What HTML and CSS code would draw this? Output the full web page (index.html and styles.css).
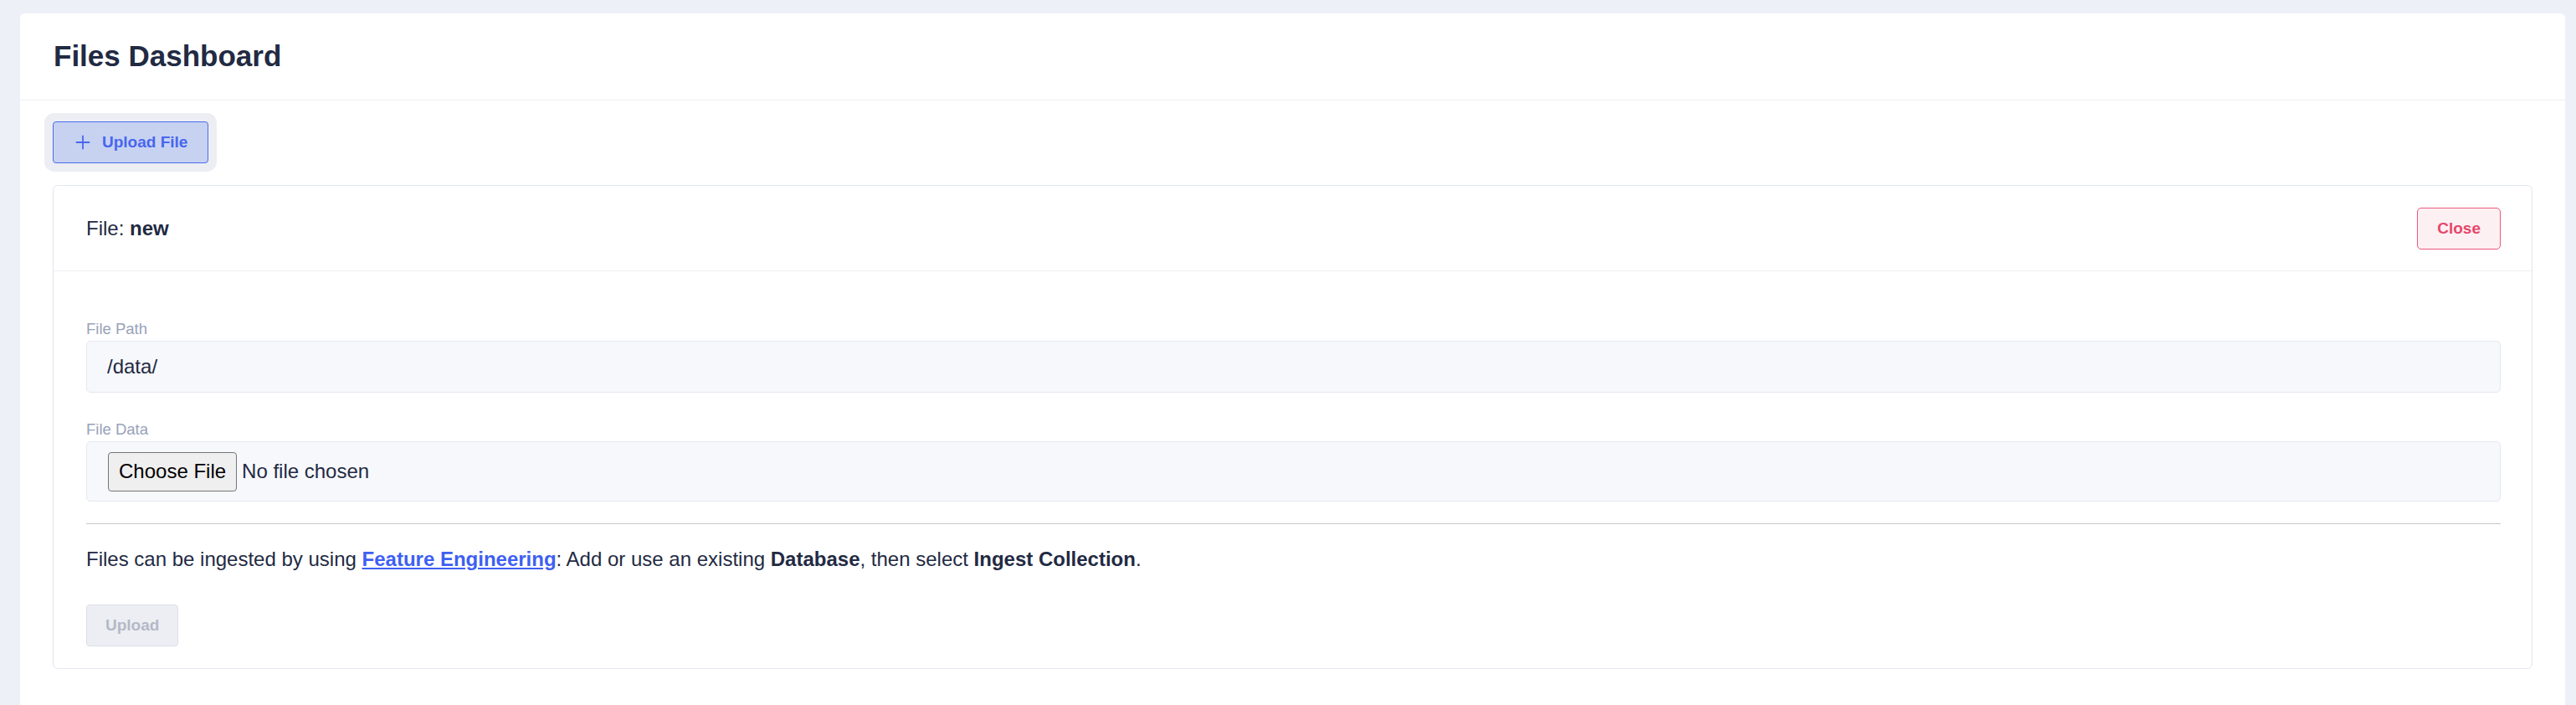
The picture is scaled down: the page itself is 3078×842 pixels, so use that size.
FILE: index.html
```html
<!DOCTYPE html>
<html lang="en">
<head>
<meta charset="utf-8">
<title>Files Dashboard</title>
<link rel="stylesheet" href="styles.css">
</head>
<body>
<div class="panel">
  <header class="panel-header">
    <h1 class="panel-title">Files Dashboard</h1>
  </header>
  <div class="panel-body">
    <div class="toolbar">
      <button class="btn-primary" type="button">
        <svg class="plus-icon" width="18" height="18" viewBox="0 0 18 18" aria-hidden="true">
          <path d="M9 1.5V16.5M1.5 9H16.5" stroke="currentColor" stroke-width="1.8" fill="none" stroke-linecap="round"/>
        </svg>
        <span>Upload File</span>
      </button>
    </div>
    <section class="card">
      <div class="card-header">
        <div class="card-title">File: <strong>new</strong></div>
        <button class="btn-close" type="button">Close</button>
      </div>
      <div class="card-body">
        <div class="field">
          <label class="field-label" for="path">File Path</label>
          <input class="text-input" id="path" type="text" value="/data/">
        </div>
        <div class="field">
          <span class="field-label">File Data</span>
          <div class="file-box">
            <label class="file-btn">Choose File<input class="file-hidden" type="file"></label>
            <span class="file-status">No file chosen</span>
          </div>
        </div>
        <hr class="divider">
        <p class="note">Files can be ingested by using <a class="note-link" href="#">Feature Engineering</a>: Add or use an existing <strong>Database</strong>, then select <strong>Ingest Collection</strong>.</p>
        <button class="btn-upload" type="button" disabled>Upload</button>
      </div>
    </section>
  </div>
</div>
</body>
</html>
```
FILE: styles.css
```css
* { box-sizing: border-box; }
html, body { margin: 0; }
body {
  background: #edf0f7;
  padding: 16px 13px 0 24px;
  font-family: "Liberation Sans", Arial, Helvetica, sans-serif;
  color: #222a43;
}
.panel {
  background: #ffffff;
  border-radius: 6px 6px 0 0;
  min-height: calc(100vh - 16px);
}
.panel-header {
  height: 104px;
  padding: 0 40px;
  display: flex;
  align-items: center;
  border-bottom: 1px solid #eceef2;
}
.panel-title {
  margin: 0;
  font-size: 35px;
  font-weight: 700;
  line-height: 1.15;
  color: #222a43;
}
.panel-body {
  padding: 25px 39px 0;
}
.toolbar {
  margin-bottom: 26px;
}
.btn-primary {
  height: 50px;
  padding: 0 24px 0 26px;
  display: inline-flex;
  align-items: center;
  gap: 14px;
  background: #c7d2f1;
  border: 1px solid #4a6cf0;
  border-radius: 4px;
  color: #4866ee;
  font-family: "Liberation Sans", Arial, sans-serif;
  font-size: 19px;
  font-weight: 700;
  box-shadow: 0 0 0 10px #eceef3;
  cursor: pointer;
}
.plus-icon { display: block; flex: none; }
.card {
  border: 1px solid #e4e6ef;
  border-radius: 6px;
  background: #ffffff;
}
.card-header {
  height: 102px;
  display: flex;
  align-items: center;
  justify-content: space-between;
  padding: 0 37px 0 39px;
  border-bottom: 1px solid #eceef2;
}
.card-title {
  font-size: 24px;
  color: #222a43;
}
.btn-close {
  height: 50px;
  padding: 0 23px;
  background: #fdf0f3;
  border: 1px solid #e9587c;
  border-radius: 5px;
  color: #e6476b;
  font-family: "Liberation Sans", Arial, sans-serif;
  font-size: 19px;
  font-weight: 700;
  cursor: pointer;
}
.card-body {
  padding: 58px 37px 26px 39px;
}
.field + .field { margin-top: 33px; }
.field-label {
  display: block;
  font-size: 18.5px;
  line-height: 22px;
  color: #99a2b8;
  margin-bottom: 3px;
}
.text-input {
  display: block;
  width: 100%;
  height: 62px;
  padding: 0 24px;
  background: #f7f8fc;
  border: 1px solid #e6e8f0;
  border-radius: 5px;
  font-family: "Liberation Sans", Arial, sans-serif;
  font-size: 24px;
  color: #222a43;
  outline: none;
}
.file-box {
  display: flex;
  align-items: center;
  height: 72px;
  padding: 0 25px;
  background: #f7f8fc;
  border: 1px solid #e6e8f0;
  border-radius: 5px;
}
.file-btn {
  display: inline-flex;
  align-items: center;
  height: 47px;
  padding: 0 12px;
  background: #efefef;
  border: 1px solid #767676;
  border-radius: 4px;
  font-size: 24px;
  color: #000000;
  margin-right: 6px;
  cursor: pointer;
}
.file-hidden { display: none; }
.file-status {
  font-size: 24px;
  color: #222a43;
}
.divider {
  margin: 26px 0 0;
  border: 0;
  border-top: 1px solid #c8c8cc;
  height: 0;
}
.note {
  margin: 24px 0 0;
  font-size: 24px;
  line-height: 36px;
  color: #222a43;
}
.note strong { font-weight: 700; }
.note-link {
  color: #3e5ff2;
  font-weight: 700;
  text-decoration: underline;
}
.btn-upload {
  display: block;
  margin-top: 36px;
  height: 50px;
  padding: 0 22px;
  background: #eceef3;
  border: 1px solid #dcdfe7;
  border-radius: 4px;
  color: #b4b9c7;
  font-family: "Liberation Sans", Arial, sans-serif;
  font-size: 19px;
  font-weight: 700;
}
```
